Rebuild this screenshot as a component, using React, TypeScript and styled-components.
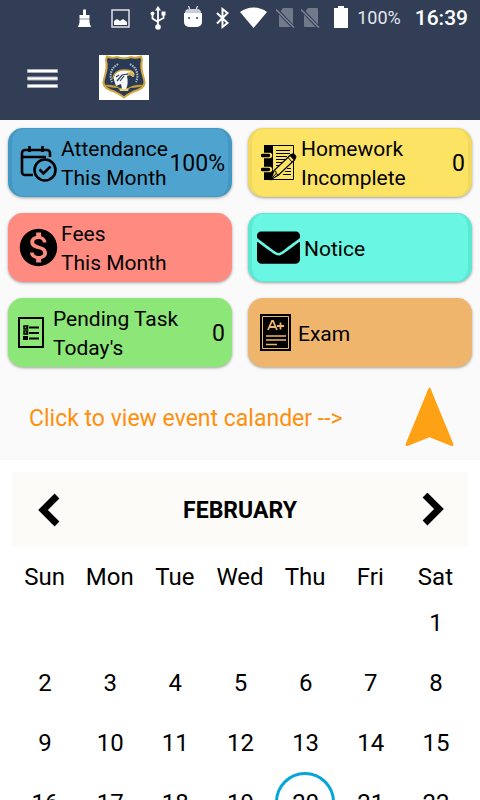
import React from "react";
import styled, { createGlobalStyle } from "styled-components";
import { MdMonetizationOn } from "react-icons/md";
import { FaEnvelope } from "react-icons/fa";

const GlobalStyle = createGlobalStyle`
  *, *::before, *::after { box-sizing: border-box; }
  body { margin: 0; background: #fff; }
  button { font: inherit; color: inherit; background: none; border: 0; padding: 0; cursor: pointer; }
  svg { display: block; flex: none; }
`;

const Screen = styled.div`
  display: flex;
  flex-direction: column;
  height: 100vh;
  overflow: hidden;
  background: #fff;
  color: #000;
  font-family: Roboto, "Liberation Sans", sans-serif;
`;

const Header = styled.header`
  flex: none;
  background: #313e56;
  color: #fff;
`;

const StatusBar = styled.div`
  display: flex;
  align-items: center;
  justify-content: flex-end;
  height: 36px;
  padding-right: 12px;
`;

const StatusIcon = styled.svg<{ $gap: number }>`
  margin-right: ${(p) => p.$gap}px;
`;

const BatteryLevel = styled.span`
  margin-right: 14px;
  font-size: 18px;
  line-height: 38px;
  color: #e4e7ec;
`;

const Clock = styled.time`
  font-size: 21px;
  font-weight: 500;
  line-height: 38px;
`;

const AppBar = styled.div`
  display: flex;
  align-items: center;
  gap: 33px;
  height: 84px;
  padding-left: 19px;
`;

const MenuButton = styled.button`
  display: grid;
  place-items: center;
  width: 47px;
  height: 47px;
`;

const Content = styled.main`
  flex: 1;
  min-height: 0;
  overflow-y: auto;
  scrollbar-width: none;
`;

const Dashboard = styled.section`
  background: #fafafa;
`;

const CardGrid = styled.div`
  display: grid;
  grid-template-columns: 1fr 1fr;
  gap: 16px;
  padding: 8px;
`;

const Card = styled.button<{ $fill: string; $edge: string }>`
  display: flex;
  align-items: center;
  min-width: 0;
  height: 69px;
  border-style: solid;
  border-width: 1px 4px;
  border-color: ${(p) => p.$edge};
  border-radius: 15px;
  background: ${(p) => p.$fill};
  box-shadow: 0 1px 3px rgba(0, 0, 0, 0.36);
  text-align: left;
`;

const IconSlot = styled.span<{ $width: number; $inset: number }>`
  flex: none;
  width: ${(p) => p.$width}px;
  padding-left: ${(p) => p.$inset}px;
`;

const CardLabel = styled.span`
  flex: 1 1 0;
  min-width: 0;
  padding-top: 3px;
  font-size: 21px;
  line-height: 29px;
  white-space: nowrap;
`;

const LabelLine = styled.span`
  display: block;
`;

const CardValue = styled.span`
  flex: none;
  padding: 1px 3px 0 0;
  font-size: 23px;
  line-height: 29px;
`;

const EventRow = styled.div`
  display: flex;
  align-items: center;
  justify-content: space-between;
  height: 85px;
  padding: 0 26px 0 29px;
`;

const EventLink = styled.a`
  padding-top: 2px;
  color: #ff8f0c;
  font-size: 23px;
  line-height: 29px;
  text-decoration: none;
  white-space: nowrap;
`;

const Calendar = styled.section`
  padding: 12px;
  background: #fff;
`;

const MonthBar = styled.div`
  display: flex;
  align-items: center;
  justify-content: space-between;
  height: 75px;
  margin-bottom: 15px;
  background: #fcfbf7;
`;

const MonthButton = styled.button`
  display: grid;
  place-items: center;
  width: 72px;
  height: 75px;
`;

const MonthName = styled.h2`
  margin: 0;
  padding-top: 1px;
  font-size: 23px;
  font-weight: 700;
  line-height: 29px;
`;

const DayTable = styled.table`
  width: 100%;
  border-collapse: collapse;
  table-layout: fixed;
  font-size: 24px;
  line-height: 30px;
`;

const WeekdayCell = styled.th`
  height: 30px;
  padding: 0;
  font-weight: 400;
`;

const DayCell = styled.td`
  height: 60px;
  padding: 0;
`;

const DayButton = styled.button<{ $today: boolean }>`
  display: block;
  width: 60px;
  height: 60px;
  margin: 0 auto;
  padding: 2px 0 0 1px;
  border: 3px solid ${(p) => (p.$today ? "#05a5d8" : "transparent")};
  border-radius: 50%;
`;

const StatusIcons = () => (
  <>
    <StatusIcon $gap={20} width="13" height="20" viewBox="0 0 13 20" fill="#fff">
      <path d="M5 1.500h3V7h3.500v3h-10V7H5z" />
      <path d="M1.500 12h10v2.500L13 19H0l1.500-4.500z" />
      <path d="M1.500 11h10" stroke="#c4c9d2" strokeWidth="2" />
    </StatusIcon>
    <StatusIcon $gap={20} width="19" height="19" viewBox="0 0 19 19">
      <rect x="1" y="1" width="17" height="17" fill="none" stroke="#dfe2e7" strokeWidth="1.500" />
      <path d="M3 16v-4l3-2 3 2 3-2 4 3v3z" fill="#fff" />
    </StatusIcon>
    <StatusIcon $gap={18} width="16" height="24" viewBox="0 0 16 24" fill="none" stroke="#fff" strokeWidth="1.800">
      <path d="M8 3v18M2.500 8v4.500L8 16M13.500 8v4L8 15" />
      <path d="M8 0l3 4.500H5z" fill="#fff" stroke="none" />
      <circle cx="8" cy="21" r="2.800" fill="#fff" stroke="none" />
      <circle cx="2.500" cy="7.500" r="2" fill="#fff" stroke="none" />
      <path d="M11.500 5.500h4v4h-4z" fill="#fff" stroke="none" />
    </StatusIcon>
    <StatusIcon $gap={14} width="18" height="24" viewBox="0 0 18 24">
      <path d="M4.500 0l1.500 4M13.500 0L12 4" stroke="#d5d9df" strokeWidth="1.300" />
      <path d="M1 7a4 4 0 0 1 4-4h8a4 4 0 0 1 4 4z" fill="#c9cdd5" />
      <path d="M0 7h18v9a5 5 0 0 1-5 5H5a5 5 0 0 1-5-5z" fill="#fff" />
      <circle cx="5" cy="12" r="1" fill="#313e56" />
      <circle cx="13" cy="12" r="1" fill="#313e56" />
    </StatusIcon>
    <StatusIcon $gap={11} width="13" height="22" viewBox="0 0 13 22" fill="none" stroke="#fff" strokeWidth="2">
      <path d="M1 6l10.500 10L6.500 20V2l5 4L1 16.500" />
    </StatusIcon>
    <StatusIcon $gap={9} width="27" height="22" viewBox="0 0 27 22" fill="#fff">
      <path d="M0 5C8-1 19-1 27 5L13.500 21z" />
    </StatusIcon>
    <StatusIcon $gap={6} width="19" height="22" viewBox="0 0 19 22">
      <path d="M7 1h9a1 1 0 0 1 1 1v17a1 1 0 0 1-1 1H4a1 1 0 0 1-1-1V6z" fill="#707a8b" />
      <path d="M1 3l17 18" stroke="#313e56" strokeWidth="3.500" />
      <path d="M0 2.500l18 18" stroke="#818a99" strokeWidth="1.500" />
    </StatusIcon>
    <StatusIcon $gap={14} width="19" height="22" viewBox="0 0 19 22">
      <path d="M7 1h9a1 1 0 0 1 1 1v17a1 1 0 0 1-1 1H4a1 1 0 0 1-1-1V6z" fill="#707a8b" />
      <path d="M1 3l17 18" stroke="#313e56" strokeWidth="3.500" />
      <path d="M0 2.500l18 18" stroke="#818a99" strokeWidth="1.500" />
    </StatusIcon>
    <StatusIcon $gap={9} width="14" height="24" viewBox="0 0 14 24" fill="#fff">
      <path d="M4 0h6v2h4v20H0V2h4z" />
    </StatusIcon>
  </>
);

const MenuIcon = () => (
  <svg width="31" height="19" viewBox="0 0 31 19" fill="#fff" stroke="#aab0ba">
    <path d="M.5.5h30v3H.5zM.5 8h30v3H.5zM.5 15.500h30v3H.5z" />
  </svg>
);

const SchoolCrest = () => (
  <svg width="50" height="46" viewBox="0 0 50 46" role="img" aria-label="School crest">
    <path d="M0 0h50v45H0z" fill="#fff" />
    <path
      d="M8 1.500c3.500 1.500 7 1.500 10 .5 4 1.500 10 1.500 14 0 3 1 6.500 1 10-.5l1 3.500c-2 7 0 12 2 19 2 6-1 9-6 11-6 2-10 4-14 7.500-4-3.500-8-5.500-14-7.500-5-2-8-5-6-11 2-7 4-12 2-19z"
      fill="#293a57"
      stroke="#d0a943"
      strokeWidth="2"
    />
    <g fill="none" stroke="#b9c0c8" strokeWidth="2" strokeDasharray="1.500 1">
      <path d="M19 9c-7 4-9 11-6 18" />
      <path d="M31 9c7 4 9 11 6 18" />
    </g>
    <path d="M4 30c6-1 13 0 17 3h8c4-3 11-4 17-3-4 2-9 3-15 3l-2 3h-8l-2-3c-6 0-11-1-15-3z" fill="#c49d37" />
    <path d="M15 25c-1-6 4-10 10-10 4 0 8 0 10 3 1 2 0 3-1 4l-3-2-3 1c1 5 1 9-1 13h-4l-1-5-5 2z" fill="#f7f8f8" />
    <path d="M14 24c0-6 5-9 11-9 4 0 7 0 9 2" fill="none" stroke="#d0a943" strokeWidth="1.300" />
    <path d="M28 18c3-1 6-1 7 1 .5 1 0 2-1 3-1-2-3-2-6-2z" fill="#d5ae40" />
    <path d="M18 26l5-6 6-1M21 26l4-5M17 22l3-2" fill="none" stroke="#293a57" strokeWidth="1.200" />
    <path d="M21 34h8v2h-8z" fill="#e7d182" />
  </svg>
);

const AttendanceIcon = () => (
  <svg width="37" height="40" viewBox="0 -2 37 40" fill="none" stroke="#000" strokeWidth="2.600">
    <path d="M13 30H5a3 3 0 0 1-3-3V8a3 3 0 0 1 3-3h22a3 3 0 0 1 3 3v4M2 12h24M9.500 1v6M22.500 1v6" />
    <circle cx="25" cy="25" r="10.500" />
    <path d="M19.500 24.500l4 4 7-7" />
  </svg>
);

const HomeworkIcon = () => (
  <svg width="36" height="38" viewBox="0 0 36 38" fill="none" stroke="#000">
    <path d="M3.500 1.500h29v34h-29z" />
    <path d="M3 1h9v35H3z" fill="#000" stroke="none" />
    <path d="M15 6.500h14M15 9.500h14M15 12.500h11M15 15.500h9M15 18.500h6M15 21.500h4M26 24.500h4M24 27.500h6M22 30.500h8" />
    <g strokeLinecap="round">
      <path d="M2.500 11.500h6M2.500 25.500h6" stroke="#fce364" strokeWidth="5.500" />
      <path d="M1.500 11.500h6M1.500 25.500h6" strokeWidth="3.500" />
    </g>
    <path d="M10 35.500l3-9L29.500 11l4 5-16 15z" fill="#fce364" strokeWidth="1.200" />
    <path d="M29 11.500l2-1.500c2-1 5 2 3.500 4l-1 2z" fill="#000" />
    <path d="M27 13.500l4 4.500M13 26.500l2 1v2l2.500 1.500M10 35.500l5-6" />
  </svg>
);

const TaskIcon = () => (
  <svg width="26" height="31" viewBox="0 0 26 31" fill="none" stroke="#000">
    <path d="M1 1h24v29H1z" strokeWidth="2" />
    <path d="M6 9h3.500v3H6zM6 14h3.500v3H6z" strokeWidth="1.500" />
    <path d="M7 10.500l1 1 2-3M7 15.500l1 1 2-3" />
    <path d="M5 19h5v4H5z" fill="#000" stroke="none" />
    <path d="M11 10.500h10M11 16h10M11 21.500h10" strokeWidth="2" />
  </svg>
);

const ExamIcon = () => (
  <svg width="31" height="37" viewBox="0 0 31 37" fill="none" stroke="#f0b56c">
    <path d="M0 0h31v37H0z" fill="#000" stroke="none" />
    <path d="M2.500 2.500h26v32h-26z" />
    <path d="M8 16l4-9h1l4 9M9.500 13h6M17 12h7M20.500 8.500v7" strokeWidth="1.800" />
    <path d="M6 22h20M6 26h20M6 30.500h11" strokeWidth="1.600" />
  </svg>
);

const PointerIcon = () => (
  <svg width="49" height="62" viewBox="0 0 49 62">
    <path d="M24.500 3L47 57.500 24.500 48.500 2 57.500z" fill="#ffa114" stroke="#ffa114" strokeWidth="3" strokeLinejoin="round" />
    <path d="M24.500 0l2.500 5h-5z" fill="#ffa114" />
  </svg>
);

const Chevron = ({ points }: { points: string }) => (
  <svg width="24" height="34" viewBox="0 0 24 34" fill="none" stroke="#000" strokeWidth="6.800">
    <polyline points={points} />
  </svg>
);

type Tile = {
  lines: string[];
  value?: string;
  fill: string;
  edge: string;
  icon: React.ReactNode;
  slot: number;
  inset: number;
};

const tiles: Tile[] = [
  { lines: ["Attendance", "This Month"], value: "100%", fill: "#4ea4cf", edge: "#4298c4", icon: <AttendanceIcon />, slot: 49, inset: 8 },
  { lines: ["Homework", "Incomplete"], value: "0", fill: "#fce364", edge: "#f1d85e", icon: <HomeworkIcon />, slot: 49, inset: 9 },
  { lines: ["Fees", "This Month"], fill: "#ff8b80", edge: "#ff8b80", icon: <MdMonetizationOn size={45} />, slot: 49, inset: 4 },
  { lines: ["Notice"], fill: "#69f6e2", edge: "#5ce9d3", icon: <FaEnvelope size={43} />, slot: 52, inset: 5 },
  { lines: ["Pending Task", "Today's"], value: "0", fill: "#8de778", edge: "#8de778", icon: <TaskIcon />, slot: 41, inset: 6 },
  { lines: ["Exam"], fill: "#f0b56c", edge: "#f0b56c", icon: <ExamIcon />, slot: 46, inset: 8 },
];

const weekdays = ["Sun", "Mon", "Tue", "Wed", "Thu", "Fri", "Sat"];
const leadingBlanks = 6;
const today = 20;
const weeks = Array.from({ length: 5 }, (_, w) =>
  Array.from({ length: 7 }, (_, d) => {
    const day = w * 7 + d - leadingBlanks + 1;
    return day >= 1 && day <= 29 ? day : null;
  })
);

export default function App() {
  return (
    <Screen>
      <GlobalStyle />
      <Header>
        <StatusBar>
          <StatusIcons />
          <BatteryLevel>100%</BatteryLevel>
          <Clock>16:39</Clock>
        </StatusBar>
        <AppBar>
          <MenuButton aria-label="Open menu">
            <MenuIcon />
          </MenuButton>
          <SchoolCrest />
        </AppBar>
      </Header>
      <Content>
        <Dashboard>
          <CardGrid>
            {tiles.map((t) => (
              <Card key={t.lines[0]} $fill={t.fill} $edge={t.edge}>
                <IconSlot $width={t.slot} $inset={t.inset}>
                  {t.icon}
                </IconSlot>
                <CardLabel>
                  {t.lines.map((line) => (
                    <LabelLine key={line}>{line}</LabelLine>
                  ))}
                </CardLabel>
                {t.value && <CardValue>{t.value}</CardValue>}
              </Card>
            ))}
          </CardGrid>
          <EventRow>
            <EventLink href="#calendar">Click to view event calander --&gt;</EventLink>
            <PointerIcon />
          </EventRow>
        </Dashboard>
        <Calendar id="calendar">
          <MonthBar>
            <MonthButton aria-label="Previous month">
              <Chevron points="21,3 7,17 21,31" />
            </MonthButton>
            <MonthName>FEBRUARY</MonthName>
            <MonthButton aria-label="Next month">
              <Chevron points="5,2 19,16 5,30" />
            </MonthButton>
          </MonthBar>
          <DayTable>
            <thead>
              <tr>
                {weekdays.map((d) => (
                  <WeekdayCell key={d} scope="col">{d}</WeekdayCell>
                ))}
              </tr>
            </thead>
            <tbody>
              {weeks.map((week, w) => (
                <tr key={w}>
                  {week.map((day, d) => (
                    <DayCell key={d}>{day && <DayButton $today={day === today}>{day}</DayButton>}</DayCell>
                  ))}
                </tr>
              ))}
            </tbody>
          </DayTable>
        </Calendar>
      </Content>
    </Screen>
  );
}
